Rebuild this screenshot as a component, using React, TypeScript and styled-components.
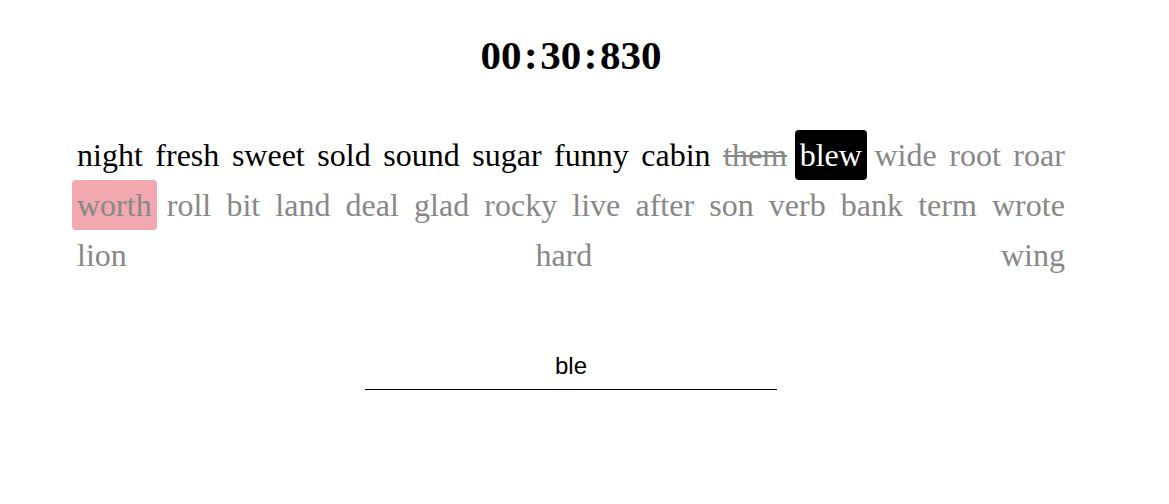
import React from "react";
import styled, { createGlobalStyle, css } from "styled-components";

const GlobalStyle = createGlobalStyle`
  html, body {
    margin: 0;
    padding: 0;
    background: #ffffff;
  }
`;

const Page = styled.main`
  width: 1142px;
  display: flex;
  flex-direction: column;
  align-items: center;
  padding-top: 32px;
  font-family: "Liberation Serif", "Times New Roman", serif;
`;

const Timer = styled.div`
  font-size: 41px;
  font-weight: 700;
  line-height: 47px;
  color: #000;
  display: flex;
  align-items: baseline;
`;

const Colon = styled.span`
  margin: 0 2.5px;
`;

const Words = styled.div`
  width: 998px;
  margin-top: 51px;
  display: flex;
  flex-direction: column;
`;

const Row = styled.div`
  display: flex;
  justify-content: space-between;
`;

type WordState = "correct" | "wrong" | "current" | "error" | "pending";

const Word = styled.span<{ $state: WordState }>`
  font-size: 32px;
  line-height: 48px;
  padding: 1px 5px;
  border-radius: 4px;
  color: #888888;
  ${(p) =>
    p.$state === "correct" &&
    css`
      color: #000000;
    `}
  ${(p) =>
    p.$state === "wrong" &&
    css`
      color: #888888;
      text-decoration: line-through;
      text-decoration-thickness: 2px;
    `}
  ${(p) =>
    p.$state === "current" &&
    css`
      color: #ffffff;
      background: #000000;
    `}
  ${(p) =>
    p.$state === "error" &&
    css`
      background: #f1a8ae;
    `}
`;

const Entry = styled.input`
  margin-top: 63px;
  width: 412px;
  height: 46px;
  padding: 0;
  border: none;
  border-bottom: 1px solid #000;
  outline: none;
  background: transparent;
  text-align: center;
  font-family: "Liberation Sans", Arial, sans-serif;
  font-size: 24px;
  color: #000;
`;

const rows: [string, WordState][][] = [
  [
    ["night", "correct"],
    ["fresh", "correct"],
    ["sweet", "correct"],
    ["sold", "correct"],
    ["sound", "correct"],
    ["sugar", "correct"],
    ["funny", "correct"],
    ["cabin", "correct"],
    ["them", "wrong"],
    ["blew", "current"],
    ["wide", "pending"],
    ["root", "pending"],
    ["roar", "pending"],
  ],
  [
    ["worth", "error"],
    ["roll", "pending"],
    ["bit", "pending"],
    ["land", "pending"],
    ["deal", "pending"],
    ["glad", "pending"],
    ["rocky", "pending"],
    ["live", "pending"],
    ["after", "pending"],
    ["son", "pending"],
    ["verb", "pending"],
    ["bank", "pending"],
    ["term", "pending"],
    ["wrote", "pending"],
  ],
  [
    ["lion", "pending"],
    ["hard", "pending"],
    ["wing", "pending"],
  ],
];

export default function App() {
  return (
    <>
      <GlobalStyle />
      <Page>
        <Timer>
          <span>00</span>
          <Colon>:</Colon>
          <span>30</span>
          <Colon>:</Colon>
          <span>830</span>
        </Timer>
        <Words>
          {rows.map((row, i) => (
            <Row key={i}>
              {row.map(([w, s], j) => (
                <Word key={j} $state={s}>
                  {w}
                </Word>
              ))}
            </Row>
          ))}
        </Words>
        <Entry value="ble" readOnly />
      </Page>
    </>
  );
}
